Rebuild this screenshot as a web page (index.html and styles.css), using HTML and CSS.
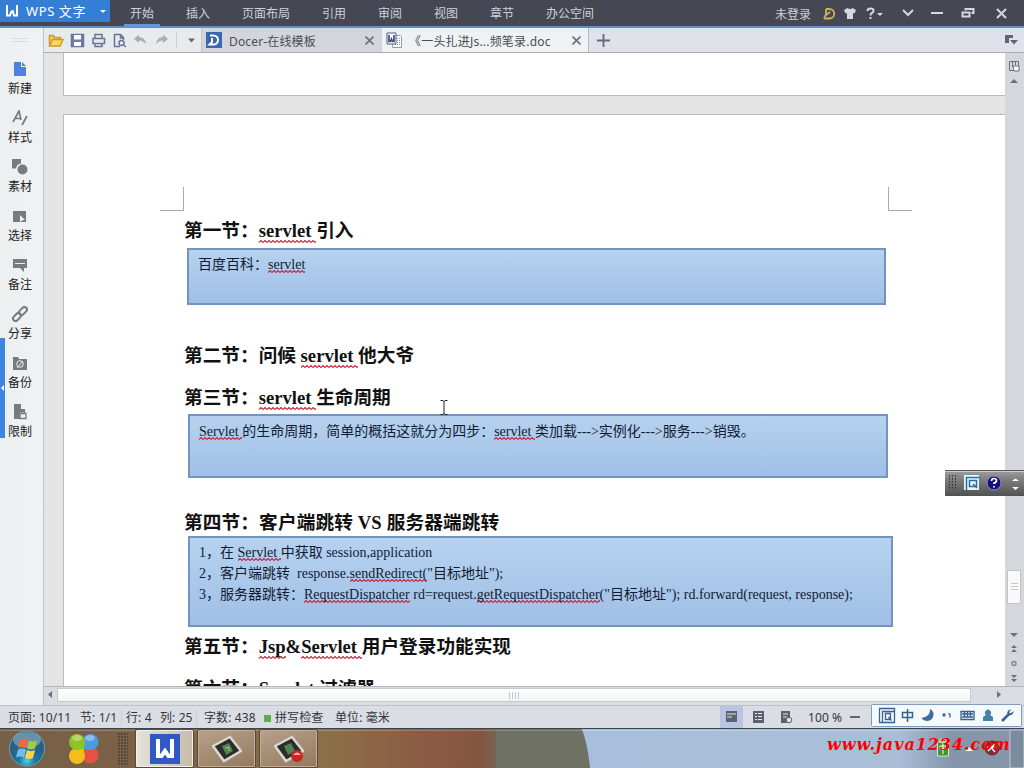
FILE: index.html
```html
<!DOCTYPE html>
<html lang="zh-CN">
<head>
    <meta charset="utf-8">
    <title>WPS 文字</title>
    <link rel="stylesheet" href="styles.css">
</head>
<body>
<!-- 标题栏 -->
<header class="titlebar">
    <div class="brand">
        <svg width="12" height="12" viewBox="0 0 12 12" fill="none" stroke="#fff" stroke-width="2"><path d="M1 0v10.500h3L5.500 6M11 0v10.500H8L6.500 5"/></svg>
        <span>WPS 文字</span>
        <i class="caret"></i>
    </div>
    <nav class="menu">
        <span class="active">开始</span><span>插入</span><span>页面布局</span><span>引用</span><span>审阅</span><span>视图</span><span>章节</span><span>办公空间</span>
    </nav>
    <div class="login">未登录</div>
    <svg class="wincons" width="202" height="26" viewBox="822 0 202 26" fill="none" stroke="#d5d8df" stroke-width="2">
        <path d="M826 9h3.500a4.500 4.500 0 0 1 0 9.500H824M826 9v5l-2 4.500M826 15l4-3" stroke="#cdb557" stroke-width="1.800"/>
        <path d="M844 10l3.500-2q2.500 2 5 0l3.500 2-1.500 3.500-1.500-.5v6h-6v-6l-1.500.5z" fill="#d5d8df" stroke="none"/>
        <path d="M867.500 11q0-2.500 3-2.500t3 2.300q0 1.500-1.500 2.200t-1.500 2.500M870.500 17v2"/>
        <path d="M877 13h6l-3 3z" fill="#d5d8df" stroke="none"/>
        <path d="M903 10l5 5 5-5M931 13h12M965.500 10.500V9h8v4h-2M962.500 12.500h7v4h-7zM997 9l9 9M1006 9l-9 9"/>
    </svg>
</header>

<main class="main">
    <!-- 左侧工具 -->
    <aside class="side">
        <i class="grip"></i>
        <div class="tool"><svg width="16" height="16"><path fill="#5080df" d="M2 1h7v5h5v9H2zM10 1l4 4h-4z"/></svg>新建</div>
        <div class="tool"><svg width="16" height="16" fill="none" stroke="#777b80" stroke-width="1.700"><path d="M1 12L7 1l2 9M3.500 8.500h5M10 15l5-9"/></svg>样式</div>
        <div class="tool"><svg width="16" height="16" fill="#777b80"><path d="M0 0h9v4.500a6 6 0 0 0-5 5H0z"/><circle cx="10.500" cy="10.500" r="5"/></svg>素材</div>
        <div class="tool"><svg width="16" height="16"><path fill="#777b80" d="M1 3h13v11H1z"/><path fill="#f0f1f1" d="M8 7l5 5-2.500.3L8 14z"/></svg>选择</div>
        <div class="tool"><svg width="16" height="16"><path fill="#777b80" d="M1 2h14v9h-3v4l-4-4H1z"/><path stroke="#eee" d="M3 6.500h10"/></svg>备注</div>
        <div class="tool"><svg width="16" height="16" fill="none" stroke="#777b80" stroke-width="2"><rect x="6.500" y="2.500" width="9" height="5" rx="2.500" transform="rotate(-45 11 5)"/><rect x=".5" y="8.500" width="9" height="5" rx="2.500" transform="rotate(-45 5 11)"/></svg>分享</div>
        <div class="tool"><svg width="16" height="16"><path fill="#777b80" d="M1 2h5l1 2h8v11H1z"/><circle cx="8" cy="9" r="3.300" fill="none" stroke="#eee"/><path d="M5 13l6-7" stroke="#eee"/></svg>备份</div>
        <div class="tool"><svg width="16" height="16"><path fill="#777b80" d="M2 0h7v5h4v3H8v7H2z"/><path d="M8 9.500h6v5H8zM9.500 9V7.500h3V9" fill="#eee" stroke="#777b80" stroke-width="1.300"/></svg>限制</div>
        <i class="handle"></i>
    </aside>

    <section class="work">
        <div class="tabbar">
            <svg class="quick" width="157" height="24" viewBox="44 28 157 24" fill="none" stroke="#6c7394" stroke-width="1.500">
                <path d="M49.500 45.500v-10h4l1 2h6v2" fill="#f3ce61" stroke="#c99a2c"/><path d="M49.500 46l3-6.500H63l-3 6.500z" fill="#ffd75e" stroke="#c99a2c"/>
                <path d="M71.500 34.500h12v12h-12z" fill="#6b7cc0"/><path d="M74 35h7v4.500h-7zM74 42h7v4h-7z" fill="#fff" stroke="none"/>
                <path d="M95 38v-3.500h7V38M93 38.500h11.500v5H93zM95 43.500h7v3h-7z"/>
                <path d="M120 46.500h-5.500v-12h6l3 3V40M120.500 34.500V38h3"/><circle cx="121.500" cy="43" r="2.500"/><path d="M123.500 45l2.500 2"/>
                <path d="M134 39l5-4.500V37q6 0 7 7-3-3.500-7-3.500V43z" fill="#a9adb6" stroke="none"/>
                <path d="M168 39l-5-4.500V37q-6 0-7 7 3-3.500 7-3.500V43z" fill="#a9adb6" stroke="none"/>
                <path d="M176.500 32v16" stroke="#ccd0d6" stroke-width="1"/>
                <path d="M188 38.500h7l-3.500 4z" fill="#666" stroke="none"/>
            </svg>
            <div class="tab docer">
                <svg width="16" height="16"><path fill="#3c67ad" d="M0 0h16v16H0z"/><path fill="none" stroke="#fff" stroke-width="2" d="M4 3.500h3.500a4.500 4.500 0 0 1 0 9H3.500L6 10V6"/></svg>
                <span>Docer-在线模板</span>
                <svg class="close" width="9" height="9"><path d="M.5.500l8 8M8.500.500l-8 8" stroke="#6d7076" stroke-width="1.600"/></svg>
            </div>
            <div class="tab current">
                <svg width="17" height="16"><path d="M7.500 3.500h7l1 1v11h-9z" fill="#fff" stroke="#999"/><path d="M11 6.500h3M11 8.500h3M9 10.500h5M9 12.500h5" stroke="#888" stroke-dasharray="1 1"/><path d="M1 1h9v11H1z" fill="#fff" stroke="#515880"/><path d="M3 3v6.500h1.500L5.500 7l1 2.500H8V3" fill="none" stroke="#3d4c87" stroke-width="1.700"/></svg>
                <span>《一头扎进Js...频笔录.doc</span>
                <svg class="close" width="9" height="9"><path d="M.5.500l8 8M8.500.500l-8 8" stroke="#6d7076" stroke-width="1.600"/></svg>
            </div>
            <svg class="plus" width="13" height="13"><path d="M6.500 0v13M0 6.500h13" stroke="#666a72" stroke-width="1.800"/></svg>
            <svg class="tablist" width="14" height="12"><path d="M1 1h8v3H5v5H1z" fill="#62656f"/><path d="M6 6h8l-4 4.500z" fill="#62656f"/></svg>
        </div>

        <div class="view">
            <div class="canvas">
                <div class="page prev"></div>
                <div class="page">
                    <div class="crops"><i></i><i></i></div>
                    <h2>第一节：<u>servlet </u>引入</h2>
                    <div class="note one">百度百科：<u>servlet</u></div>
                    <h2>第二节：问候 <u>servlet </u>他大爷</h2>
                    <h2>第三节：<u>servlet </u>生命周期</h2>
                    <div class="note two"><u>Servlet </u>的生命周期，简单的概括这就分为四步：<u>servlet </u>类加载---&gt;实例化---&gt;服务---&gt;销毁。</div>
                    <h2 class="wide">第四节：客户端跳转 VS 服务器端跳转</h2>
                    <div class="note three">1，在 <u>Servlet </u>中获取 session,application<br>2，客户端跳转&nbsp; response.<u>sendRedirect(</u>"目标地址");<br>3，服务器跳转：<u>RequestDispatcher</u> rd=request.<u>getRequestDispatcher</u>("目标地址"); rd.forward(request, response);</div>
                    <h2>第五节：<u>Jsp</u>&amp;<u>Servlet </u>用户登录功能实现</h2>
                    <h2>第六节：<u>Servlet </u>过滤器</h2>
                </div>
            </div>
            <div class="vscroll">
                <svg width="19" height="633" viewBox="1005 53 19 633" fill="#6c6f76">
                    <path d="M1009.500 61.500h9v9h-9zM1012.500 62v5M1015.500 62v3" fill="none" stroke="#6c6f76"/><path d="M1013 66h6v5h-5z" fill="#fff" stroke="#6c6f76"/>
                    <path d="M1010 83h8l-4-4z"/>
                    <rect x="1007.500" y="570.500" width="13" height="33" fill="#f9f9fa" stroke="#c2c4c9"/>
                    <path d="M1011 583.500h7M1011 586.500h7M1011 589.500h7" stroke="#c4c6ca"/>
                    <path d="M1010 633h8l-4 4zM1011 648h6l-3-3zM1011 652h6l-3-3zM1011 675h6l-3 3zM1011 679h6l-3 3z"/>
                    <circle cx="1014" cy="663.500" r="2" fill="none" stroke="#84878d" stroke-width="1.500"/>
                </svg>
            </div>
        </div>
        <div class="hscroll">
            <svg width="6" height="8"><path d="M5 0v7L1 3.500z" fill="#6c6f76"/></svg>
            <div class="thumb"><i></i></div>
            <svg width="6" height="8"><path d="M1 0v7l4-3.500z" fill="#6c6f76"/></svg>
        </div>
    </section>
</main>

<!-- 状态栏 -->
<footer class="status">
    <span class="pageno">页面: 10/11</span><span class="sect">节: 1/1</span><span class="row">行: 4</span><span class="col">列: 25</span><span class="words">字数: 438</span><span class="spell"><i></i>拼写检查</span><span class="unit">单位: 毫米</span>
    <svg class="modes" width="76" height="22" viewBox="720 706 76 22">
        <path d="M720 706h23v22h-23z" fill="#b9c5e2"/>
        <path d="M726 711h11v11h-11zM753 711h11v12h-11zM781 711h9v12h-9z" fill="#5d616d"/>
        <path d="M727 714h9M727 717h5M755 713.500h2M758 713.500h4M755 716.500h2M758 716.500h4M755 719.500h2M758 719.500h4M783 714h5M783 717h4" stroke="#e5e8ef" stroke-width="1.200"/>
        <circle cx="789" cy="720" r="2.800" fill="#dfe1e6" stroke="#5d616d"/>
    </svg>
    <span class="zoom">100 %</span><i class="minus"></i>
</footer>

<!-- 任务栏 -->
<div class="taskbar">
    <svg class="wall" width="1024" height="39">
        <defs>
            <linearGradient id="brown"><stop offset="0" stop-color="#75604a"/><stop offset=".3" stop-color="#7c6245"/><stop offset=".65" stop-color="#8b7047"/><stop offset=".83" stop-color="#8c5c45"/><stop offset=".96" stop-color="#845541"/><stop offset="1" stop-color="#716757"/></linearGradient>
            <linearGradient id="blue"><stop offset="0" stop-color="#a7bfdb"/><stop offset=".72" stop-color="#a9bdd6"/><stop offset=".84" stop-color="#8395a9"/><stop offset="1" stop-color="#8998ab"/></linearGradient>
        </defs>
        <path d="M0 0h500v39H0z" fill="url(#brown)"/><path d="M496 0h94v39h-94z" fill="#6f7164"/><path d="M582 0h442v39H590q-2-22-8-39z" fill="url(#blue)"/>
        <path d="M0 1.500h1024" stroke="#fff" stroke-opacity=".22"/>
    </svg>
    <svg class="start" width="38" height="37" viewBox="0 0 38 37">
        <defs><radialGradient id="orb" cy=".85"><stop offset="0" stop-color="#50d2e6"/><stop offset=".45" stop-color="#1879a8"/><stop offset="1" stop-color="#276083"/></radialGradient></defs>
        <circle cx="19" cy="18.500" r="17.500" fill="url(#orb)" stroke="#6ba1b4"/>
        <ellipse cx="19" cy="10" rx="14" ry="8" fill="#fff" opacity=".3"/>
        <path d="M12 10q4-2 8 0l-2 8q-4-2-8 0z" fill="#ef693a"/><path d="M21 10.500q4 2 8 0l-2 8q-4 2-8 0z" fill="#a3cb45"/><path d="M10 19.500q4-2 8 0l-2 8q-4-2-8 0z" fill="#78bce9"/><path d="M19 20q4 2 8 0l-2 8q-4 2-8 0z" fill="#fdd34a"/>
    </svg>
    <svg class="clover" width="32" height="32">
        <circle cx="22.500" cy="22.500" r="8" fill="#e45243"/><path d="M16 16h8v8h-8z" fill="#e45243"/>
        <circle cx="9" cy="23" r="8" fill="#f6bb1d"/><path d="M8 16h8v8H8z" fill="#f6bb1d"/>
        <circle cx="22.500" cy="9" r="8" fill="#4a9be2"/><path d="M16 8h8v8h-8z" fill="#4a9be2"/>
        <circle cx="9" cy="9" r="8" fill="#8cc424"/><path d="M8 8h8v8H8z" fill="#8cc424"/>
        <g fill="#fff" opacity=".35"><ellipse cx="9" cy="5" rx="5" ry="3"/><ellipse cx="22" cy="5" rx="5" ry="3"/></g>
    </svg>
    <i class="dots"></i>
    <div class="task on"><svg width="30" height="30"><path fill="#3159c6" d="M0 0h30v30H0z"/><path d="M8 5v17h3.500l3.500-5 3.500 5H22V5" fill="none" stroke="#fff" stroke-width="4"/></svg></div>
    <div class="task"><svg width="30" height="28"><path d="M1 11l17-9 11 14-17 10z" fill="#292e2a" stroke="#dad8d0" stroke-width="2.500"/><path d="M10 11l7-3 4 8-7 4z" fill="#548154"/><path d="M13 13l4-1v4" stroke="#a4cc91" fill="none"/></svg></div>
    <div class="task"><svg width="30" height="28"><path d="M1 11l17-9 11 14-17 10z" fill="#292e2a" stroke="#dad8d0" stroke-width="2.500"/><path d="M10 11l7-3 4 8-7 4z" fill="#548154"/><circle cx="23" cy="21" r="6" fill="#c92623"/><path d="M19 20q4-5 8 0z" fill="#f5b2a9"/></svg></div>
    <svg class="tray" width="88" height="39" viewBox="936 729 88 39">
        <path d="M937.500 742h11v14h-11zM940 739h6v3h-6z" fill="#47942b" stroke="#d5e3cf"/><path d="M940 746h6v3h-6zM943 743v11" fill="none" stroke="#fff"/>
        <path d="M965 751h8l-4-4z" fill="#fff"/>
        <circle cx="992" cy="748" r="7.500" fill="#842b3b"/><path d="M987 747h10M988 751l7-7M989 745l6 7" stroke="#fff" stroke-width="1.500"/>
        <path d="M1010 730h14v38h-14z" fill="#7c8b9e" stroke="#bac6d3"/>
    </svg>
</div>

<!-- 悬浮元素 -->
<svg class="ibeam" width="8" height="15"><path d="M.5.500h2.500l1 1 1-1h2.500M4 1v13M.5 14.500H3l1-1 1 1h2.500" fill="none" stroke="#222"/></svg>
<svg class="langbar" width="79" height="26" viewBox="945 470 79 26">
    <defs><linearGradient id="bar" x2="0" y2="1"><stop offset="0" stop-color="#a0a0a0"/><stop offset=".35" stop-color="#7f7f7f"/><stop offset="1" stop-color="#505152"/></linearGradient></defs>
    <path d="M945 470h79v26h-79z" fill="url(#bar)"/><path d="M945 470.500h79" stroke="#555"/><path d="M945 471.500h79" stroke="#ccc"/>
    <path d="M949.500 475v15M952.500 475v15M955.500 475v15" stroke="#333" stroke-dasharray="1.500 1.500"/>
    <path d="M964 475h15v15h-15z" fill="#e9f4fb"/><path d="M966.500 490v-12.500h13M969.500 480.500h7v6h-7zM973 484l4 4" fill="none" stroke="#22709c" stroke-width="1.500"/>
    <circle cx="994" cy="483" r="7" fill="#15107e" stroke="#8d8bd2"/><path d="M991.500 481q0-2.500 2.500-2.500t2.500 2-2.500 2.500v1M994 486v1.500" fill="none" stroke="#fff" stroke-width="1.700"/>
    <path d="M1012 481h7l-3.500-2.500zM1012 487h7l-3.500 3z" fill="#fff"/>
</svg>
<svg class="ime" width="151" height="23" viewBox="871 704 151 23">
    <rect x="871.500" y="704.500" width="150" height="22" rx="1" fill="#f4f9fd" stroke="#7f9cc0"/>
    <g fill="none" stroke="#39628c" stroke-width="1.300">
        <path d="M879.500 708.500h15v14h-15zM882.500 722v-10.500h12M885.500 713.500h5v6h-5zM888.500 717l3 3.500"/>
        <path d="M902.500 712.500h10v5h-10zM907.500 709v13" stroke-width="1.500"/>
        <path d="M930 709q1 7-8.500 9 2 3 6 3 6-1 6-7 0-3-3.500-5z" fill="#3f6c9b" stroke="none"/>
        <circle cx="944" cy="715" r="1"/><path d="M948.500 713.500q2 0 1.500 4"/>
        <path d="M961 711.500h13v8h-13zM962 714h11M962 717h11M964.500 712v5M967.500 712v5M970.500 712v5"/>
        <path d="M983 721v-4l3-2a3 3 0 1 1 4 0l3 2v4z" fill="#4b7fa8" stroke="none"/>
        <path d="M1002 721l6.500-6.500" stroke-width="2.600"/><path d="M1011.500 709.500l-2.500 2.500 1.500 1.500 3-2.500q0 4-4 4.500-3-1-2-4 1-2 4-2" fill="#39628c" stroke="none"/>
    </g>
</svg>
<div class="site">www.java1234.com</div>
</body>
</html>
```

FILE: styles.css
```css
* {
    box-sizing: border-box;
}

body {
    margin: 0;
    width: 1024px;
    height: 768px;
    overflow: hidden;
    position: relative;
    display: flex;
    flex-direction: column;
    font: 12px/16px "Noto Sans", "Noto Sans CJK SC", sans-serif;
    color: #33353a;
}

svg {
    display: block;
    flex: none;
}

/* 标题栏 */
.titlebar {
    height: 28px;
    display: flex;
    background: #454852;
    border-bottom: 2px solid #648ebb;
    color: #ced1d8;
}

.brand {
    width: 110px;
    height: 22px;
    padding: 0 4px 0 6px;
    display: flex;
    align-items: center;
    background: #347fd5;
    color: #fff;
    font-size: 13px;
    letter-spacing: .6px;
}

.brand span {
    margin-left: 8px;
    white-space: nowrap;
}

.caret {
    margin-left: auto;
    border: 3px solid transparent;
    border-top-color: #fff;
    border-bottom: 0;
}

.menu {
    margin-left: 14px;
    display: flex;
    gap: 20px;
    line-height: 28px;
}

.menu span {
    padding: 0 6px;
    height: 27px;
    white-space: nowrap;
}

.menu .active {
    border-bottom: 3px solid #629ad7;
}

.login {
    margin-left: auto;
    padding-right: 11px;
    line-height: 30px;
}

.main {
    height: 677px;
    display: flex;
    background: #eff1f2;
}

/* 左侧工具 */
.side {
    width: 44px;
    padding-left: 6px;
    position: relative;
    border-right: 1px solid #bfc2c6;
    background: linear-gradient(90deg, #ecf0f1, #f0f1f2);
}

.grip {
    display: block;
    width: 16px;
    height: 4px;
    margin: 10px 0 19px 6px;
    border: solid #d4dce0;
    border-width: 1px 0;
}

.tool {
    width: 28px;
    height: 49px;
    display: flex;
    flex-direction: column;
    align-items: center;
    gap: 4px;
    color: #222;
}

.handle {
    position: absolute;
    left: 0;
    top: 310px;
    width: 5px;
    height: 100px;
    background: #3b84df;
}

.handle::after {
    content: "";
    position: absolute;
    right: 1px;
    top: 47px;
    border: 3px solid transparent;
    border-left: 0;
    border-right-color: #fff;
}

.work {
    width: 980px;
}

.tabbar {
    height: 25px;
    display: flex;
    align-items: center;
    background: linear-gradient(#d6e4f2, #dfe2e9 5px);
    border-bottom: 1px solid #a9acb1;
}

.quick {
    background: #e8ebee;
}

.tab {
    height: 24px;
    display: flex;
    align-items: center;
    white-space: nowrap;
    color: #4b4d53;
}

.tab span {
    padding-top: 3px;
}

.docer {
    width: 181px;
    padding: 0 8px 0 4px;
    background: #d3d5dc;
    border-left: 1px solid #c3c6cc;
}

.docer span {
    margin-left: 7px;
    letter-spacing: .15px;
}

.current {
    width: 207px;
    padding: 0 7px 0 4px;
    background: #eff2f4;
    border-right: 1px solid #b5b8c0;
}

.current span {
    margin-left: 6px;
    letter-spacing: .2px;
}

.close {
    margin-left: auto;
}

.plus {
    margin-left: 8px;
}

.tablist {
    margin-left: auto;
    margin-right: 6px;
}

/* 文档区 */
.view {
    height: 633px;
    display: flex;
}

.canvas {
    width: 961px;
    height: 633px;
    overflow: hidden;
    padding-left: 19px;
    background: #e4e4e5;
}

.page {
    height: 590px;
    padding: 72px 0 0 121px;
    background: #fff;
    border: solid #bbb;
    border-width: 1px 0 0 1px;
}

.prev {
    height: 43px;
    padding: 0;
    margin-bottom: 18px;
    border-width: 0 0 1px 1px;
}

.crops {
    width: 752px;
    height: 24px;
    margin: 0 0 7px -25px;
    display: flex;
    justify-content: space-between;
}

.crops i {
    width: 24px;
    border: solid #aaa;
    border-width: 0 1px 1px 0;
}

.crops i + i {
    border-width: 0 0 1px 1px;
}

.page h2 {
    margin: 0 0 16px -1px;
    font: bold 18.67px/26px "Liberation Serif", "Noto Sans CJK SC", serif;
    color: #111;
    white-space: pre;
}

/* 拼写错误波浪线 */
.page u {
    text-decoration: none;
    white-space: pre;
    padding-bottom: 1px;
    background: url("data:image/svg+xml,%3Csvg xmlns='http://www.w3.org/2000/svg' width='4' height='3'%3E%3Cpath d='M0 2.500L2 .5L4 2.500' fill='none' stroke='%23c8243f' stroke-width='1.100'/%3E%3C/svg%3E") 0 100% repeat-x;
}

.page h2 u {
    padding-bottom: 2px;
}

.page .wide {
    letter-spacing: .12px;
}

.note {
    padding: 5px 9px;
    border: 2px solid #7395bb;
    background: linear-gradient(#b6d2ef, #a0bfe5);
    font: 14px/21px "Liberation Serif", "Noto Sans CJK SC", serif;
    color: #111c34;
    white-space: nowrap;
}

.one {
    width: 699px;
    height: 57px;
    margin: -12px 0 38px 2px;
    padding-top: 4px;
}

.two {
    width: 700px;
    height: 64px;
    margin: -13px 0 32px 3px;
}

.three {
    width: 705px;
    height: 91px;
    margin: -16px 0 7px 3px;
    padding-top: 4px;
}

.vscroll {
    width: 19px;
    background: #d6d7dd;
}

.hscroll {
    height: 19px;
    display: flex;
    align-items: center;
    padding: 0 22px 2px 3px;
    justify-content: space-between;
    background: #dadce1;
    border-top: 1px solid #b5b6b9;
}

.thumb {
    width: 914px;
    height: 14px;
    margin-right: auto;
    margin-left: 4px;
    display: flex;
    justify-content: center;
    align-items: center;
    background: linear-gradient(#fff, #f2f3f4);
    border: 1px solid #c8c9cd;
}

.thumb i {
    width: 10px;
    height: 7px;
    background: repeating-linear-gradient(90deg, #c4c5c8 0 1px, transparent 1px 3px);
}

/* 状态栏 */
.status {
    height: 24px;
    display: flex;
    align-items: center;
    padding-left: 8px;
    background: #dbdde4;
    border-top: 1px solid #bfc2c9;
    border-bottom: 1px solid #3b4549;
    white-space: nowrap;
}

.status span {
    position: relative;
    top: 1px;
    letter-spacing: .1px;
}

.pageno {
    width: 72px;
}

.sect {
    width: 42px;
}

.row {
    width: 38px;
    padding-left: 4px;
}

.col {
    width: 37px;
}

.words {
    width: 66px;
    padding-left: 7px;
}

.spell {
    width: 71px;
    display: flex;
    align-items: center;
    gap: 4px;
}

.spell i {
    width: 7px;
    height: 7px;
    background: #60ad50;
}

.sect,
.col,
.words {
    border-right: 1px solid #cbcdd4;
}

.words {
    margin-right: 1px;
    border-right: 0;
}

.modes {
    margin-left: auto;
}

.zoom {
    margin-left: 12px;
    width: 42px;
}

.minus {
    width: 10px;
    height: 2px;
    margin-right: 164px;
    background: #666;
}

/* 任务栏 */
.taskbar {
    height: 39px;
    display: flex;
    align-items: center;
    position: relative;
}

.taskbar > * {
    position: relative;
    flex: none;
}

.taskbar .wall {
    position: absolute;
    left: 0;
    top: 0;
}

.start {
    margin-left: 8px;
}

.clover {
    margin-left: 22px;
}

.dots {
    width: 10px;
    height: 32px;
    margin-left: 18px;
    background: radial-gradient(circle at 1px 1px, #54483a .9px, transparent 1.100px) 0 0 / 3px 3px;
}

.task {
    width: 59px;
    height: 39px;
    margin-left: 3px;
    display: flex;
    align-items: center;
    justify-content: center;
    border: 1px solid #574a3d;
    border-radius: 2px;
    background: linear-gradient(160deg, #b7a28c, #95785c);
    box-shadow: inset 0 0 0 1px #c1ae9a;
}

.dots + .task {
    margin-left: 7px;
}

.on {
    background: linear-gradient(90deg, #e6e2da, #c7bba8);
    box-shadow: inset 0 0 0 1px #f4f1e9;
}

.tray {
    margin-left: auto;
}

/* 悬浮元素 */
.ibeam {
    position: absolute;
    left: 440px;
    top: 400px;
}

.langbar {
    position: absolute;
    right: 0;
    top: 470px;
}

.ime {
    position: absolute;
    left: 871px;
    top: 704px;
}

.site {
    position: absolute;
    left: 827px;
    top: 735px;
    font: italic bold 16px/20px "DejaVu Serif", serif;
    letter-spacing: .95px;
    color: #f00;
    white-space: nowrap;
}
```
